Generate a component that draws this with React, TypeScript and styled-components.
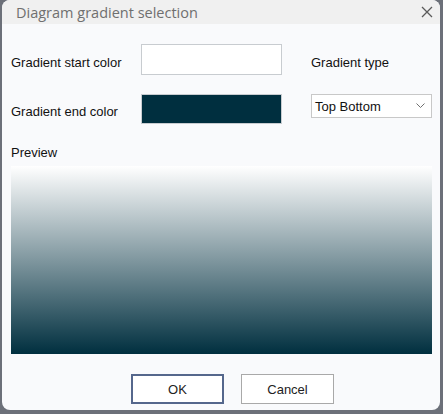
import styled, { createGlobalStyle } from "styled-components";

const GlobalStyle = createGlobalStyle`
  html, body {
    margin: 0;
    padding: 0;
    background: #6c7079;
  }
`;

export default function App() {
  return (
    <>
      <GlobalStyle />
      <Window>
        <TitleBar>
          <Title>Diagram gradient selection</Title>
          <CloseButton aria-label="Close">
            <svg width="12" height="12" viewBox="0 0 12 12">
              <path
                d="M1 1 L11 11 M11 1 L1 11"
                stroke="#5a5a5a"
                strokeWidth="1.3"
                fill="none"
              />
            </svg>
          </CloseButton>
        </TitleBar>
        <Body>
          <FieldGrid>
            <Label>Gradient start color</Label>
            <Swatch $color="#ffffff" />
            <span />
            <Label>Gradient type</Label>

            <Label>Gradient end color</Label>
            <Swatch $color="#002f3f" />
            <span />
            <Select>
              <span>Top Bottom</span>
              <svg width="9" height="6" viewBox="0 0 9 6">
                <path
                  d="M0.5 0.5 L4.5 4.5 L8.5 0.5"
                  stroke="#707070"
                  strokeWidth="1"
                  fill="none"
                />
              </svg>
            </Select>
          </FieldGrid>
          <PreviewLabel>Preview</PreviewLabel>
          <Preview $from="#ffffff" $to="#002f3f" />
          <ButtonRow>
            <Button $focused>OK</Button>
            <Button>Cancel</Button>
          </ButtonRow>
        </Body>
      </Window>
    </>
  );
}

const Window = styled.div`
  width: 438px;
  height: 410px;
  margin-left: 2px;
  background: #f9fafc;
  border-radius: 8px;
  overflow: hidden;
  display: flex;
  flex-direction: column;
  font-family: "Liberation Sans", Arial, sans-serif;
`;

const TitleBar = styled.div`
  height: 24px;
  background: #f0f0f0;
  display: flex;
  align-items: center;
  justify-content: space-between;
  padding: 0 7px 0 14px;
`;

const Title = styled.span`
  font-family: "Open Sans", "Noto Sans", sans-serif;
  font-size: 14.5px;
  color: #6f6f6f;
`;

const CloseButton = styled.button`
  border: none;
  background: none;
  padding: 0;
  width: 12px;
  height: 12px;
  display: flex;
`;

const Body = styled.div`
  padding: 20px 9px 0 9px;
  display: flex;
  flex-direction: column;
`;

const FieldGrid = styled.div`
  display: grid;
  grid-template-columns: 130px 141px 29px 121px;
  grid-template-rows: 31px 30px;
  row-gap: 19px;
  align-items: center;
`;

const Label = styled.span`
  font-size: 13px;
  color: #111;
  padding-top: 5px;
`;

const Swatch = styled.div<{ $color: string }>`
  height: 100%;
  box-sizing: border-box;
  background: ${(p) => p.$color};
  border: 1px solid #c8ccd0;
`;

const Select = styled.div`
  align-self: start;
  height: 24px;
  box-sizing: border-box;
  background: #ffffff;
  border: 1px solid #c8c8c8;
  display: flex;
  align-items: center;
  justify-content: space-between;
  padding: 0 6px 0 3px;
  font-size: 13px;
  color: #111;
`;

const PreviewLabel = styled.span`
  margin-top: 22px;
  height: 14px;
  line-height: 14px;
  font-size: 13px;
  color: #111;
`;

const Preview = styled.div<{ $from: string; $to: string }>`
  margin-top: 6px;
  height: 188px;
  width: 421px;
  background: linear-gradient(to bottom, ${(p) => p.$from}, ${(p) => p.$to});
`;

const ButtonRow = styled.div`
  margin-top: 20px;
  display: flex;
  gap: 17px;
  padding-left: 120px;
`;

const Button = styled.button<{ $focused?: boolean }>`
  width: 93px;
  height: 30px;
  box-sizing: border-box;
  background: #ffffff;
  border: ${(p) => (p.$focused ? "2px solid #55678c" : "1px solid #a9a9a9")};
  font-family: "Liberation Sans", Arial, sans-serif;
  font-size: 13px;
  color: #222;
  padding: 0;
`;
